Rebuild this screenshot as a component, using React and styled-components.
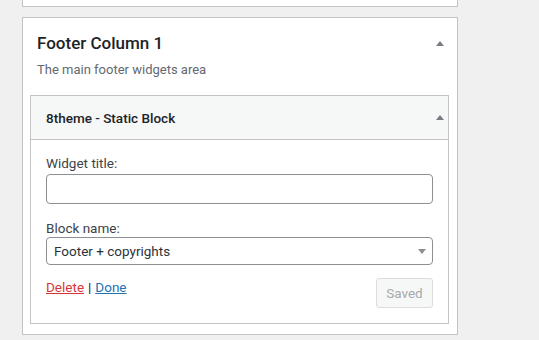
import React from "react";
import styled, { createGlobalStyle } from "styled-components";

const GlobalStyle = createGlobalStyle`
  html, body {
    margin: 0;
    padding: 0;
    background: #f0f0f1;
    font-family: Roboto, "Noto Sans", sans-serif;
    color: #3c434a;
  }
`;

const Page = styled.div`
  width: 436px;
  padding-left: 22px;
`;

const TopPanel = styled.div`
  height: 6px;
  background: #fff;
  border: 1px solid #c3c4c7;
  border-top: none;
  margin-bottom: 10px;
`;

const Panel = styled.div`
  background: #fff;
  border: 1px solid #c3c4c7;
  padding-bottom: 10px;
`;

const PanelHeader = styled.div`
  display: flex;
  justify-content: space-between;
  align-items: center;
  padding: 13px 13px 0 14px;
`;

const PanelTitle = styled.h2`
  margin: 0;
  font-size: 17px;
  line-height: 24px;
  font-weight: 500;
  color: #1d2327;
`;

const Description = styled.p`
  margin: 6px 0 0 14px;
  font-size: 13px;
  line-height: 18px;
  color: #646970;
`;

const Arrow = () => (
  <svg width="8" height="5" viewBox="0 0 8 5">
    <polygon points="4,0 8,5 0,5" fill="#787c82" />
  </svg>
);

const Widget = styled.div`
  margin: 16px 8px 0 7px;
  border: 1px solid #c3c4c7;
`;

const WidgetTop = styled.div`
  display: flex;
  justify-content: space-between;
  align-items: center;
  height: 43px;
  padding: 0 4px 0 15px;
  background: #f6f7f7;
  border-bottom: 1px solid #c3c4c7;
`;

const WidgetTitle = styled.h3`
  margin: 0;
  font-size: 13.5px;
  font-weight: 500;
  color: #1d2327;
`;

const WidgetBody = styled.div`
  padding: 14px 15px 15px;
`;

const Label = styled.label`
  display: block;
  font-size: 13.5px;
  line-height: 18px;
  color: #3c434a;
`;

const Field = styled.div`
  margin-bottom: ${(p) => p.$gap || 0}px;
`;

const TextInput = styled.input`
  display: block;
  box-sizing: border-box;
  width: 100%;
  height: 30px;
  margin-top: 2px;
  border: 1px solid #8c8f94;
  border-radius: 4px;
  background: #fff;
  &:focus {
    outline: none;
  }
`;

const Select = styled.div`
  box-sizing: border-box;
  display: flex;
  align-items: center;
  justify-content: space-between;
  height: 28px;
  padding: 0 6px 0 7px;
  border: 1px solid #8c8f94;
  border-radius: 4px;
  font-size: 13.5px;
  color: #2c3338;
`;

const Actions = styled.div`
  display: flex;
  justify-content: space-between;
  align-items: flex-start;
  margin-top: 13px;
`;

const Links = styled.div`
  font-size: 13.5px;
  line-height: 18px;
`;

const Separator = styled.span`
  color: #1d2327;
  margin: 0 4px;
`;

const Link = styled.a`
  color: ${(p) => p.$color};
  text-decoration: underline;
  cursor: pointer;
`;

const SavedButton = styled.button`
  box-sizing: border-box;
  width: 57px;
  height: 30px;
  border: 1px solid #dcdcde;
  border-radius: 3px;
  background: #f6f7f7;
  color: #a7aaad;
  font-family: inherit;
  font-size: 13.5px;
  padding: 0;
`;

export default function App() {
  return (
    <>
      <GlobalStyle />
      <Page>
        <TopPanel />
        <Panel>
          <PanelHeader>
            <PanelTitle>Footer Column 1</PanelTitle>
            <Arrow />
          </PanelHeader>
          <Description>The main footer widgets area</Description>
          <Widget>
            <WidgetTop>
              <WidgetTitle>8theme - Static Block</WidgetTitle>
              <Arrow />
            </WidgetTop>
            <WidgetBody>
              <Field $gap={15}>
                <Label>Widget title:</Label>
                <TextInput type="text" />
              </Field>
              <Field>
                <Label>Block name:</Label>
                <Select>
                  <span>Footer + copyrights</span>
                  <svg width="8" height="5" viewBox="0 0 8 5">
                    <polygon points="0,0 8,0 4,5" fill="#8c8f94" />
                  </svg>
                </Select>
              </Field>
              <Actions>
                <Links>
                  <Link $color="#d63638">Delete</Link>
                  <Separator>|</Separator>
                  <Link $color="#2271b1">Done</Link>
                </Links>
                <SavedButton disabled>Saved</SavedButton>
              </Actions>
            </WidgetBody>
          </Widget>
        </Panel>
      </Page>
    </>
  );
}
